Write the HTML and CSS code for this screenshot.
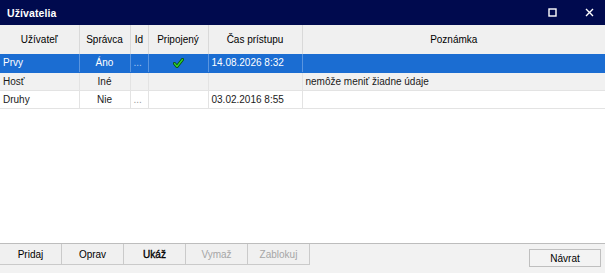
FILE: index.html
```html
<!DOCTYPE html>
<html lang="sk">

<head>
    <meta charset="UTF-8">
    <meta name="viewport" content="width=device-width, initial-scale=1.0">
    <title>Užívatelia</title>

    <link rel="stylesheet" href="styles.css">
</head>

<body>
    <div class="window">
        <div class="titlebar">
            <span class="title">Užívatelia</span>
            <div class="controls">
                <svg width="9" height="9" viewBox="0 0 9 9">
                    <rect x="1" y="1" width="7" height="7" fill="none" stroke="#fff" stroke-width="1.4" />
                </svg>
                <svg width="9" height="9" viewBox="0 0 9 9">
                    <path d="M1 1 L8 8 M8 1 L1 8" stroke="#fff" stroke-width="1.4" />
                </svg>
            </div>
        </div>

        <div class="grid">
            <table>
                <colgroup>
                    <col class="c-user">
                    <col class="c-admin">
                    <col class="c-id">
                    <col class="c-conn">
                    <col class="c-time">
                    <col>
                </colgroup>
                <thead>
                    <tr>
                        <th>Užívateľ</th>
                        <th>Správca</th>
                        <th>Id</th>
                        <th>Pripojený</th>
                        <th>Čas prístupu</th>
                        <th>Poznámka</th>
                    </tr>
                </thead>
                <tbody>
                    <tr class="selected">
                        <td>Prvy</td>
                        <td class="center">Áno</td>
                        <td class="dots">...</td>
                        <td class="center">
                            <svg class="check" width="11" height="10" viewBox="0 0 11 10">
                                <path d="M1.5 5.5 L4 8.5 L9.5 1.5" fill="none" stroke="#0a4f0a" stroke-width="3" stroke-linecap="round" stroke-linejoin="round" />
                                <path d="M1.5 5.5 L4 8.5 L9.5 1.5" fill="none" stroke="#2fd12f" stroke-width="1.4" stroke-linecap="round" stroke-linejoin="round" />
                            </svg>
                        </td>
                        <td>14.08.2026 8:32</td>
                        <td></td>
                    </tr>
                    <tr class="alt">
                        <td>Hosť</td>
                        <td class="center">Iné</td>
                        <td></td>
                        <td></td>
                        <td></td>
                        <td>nemôže meniť žiadne údaje</td>
                    </tr>
                    <tr>
                        <td>Druhy</td>
                        <td class="center">Nie</td>
                        <td class="dots">...</td>
                        <td></td>
                        <td>03.02.2016 8:55</td>
                        <td></td>
                    </tr>
                </tbody>
            </table>
        </div>

        <div class="footer">
            <div class="actions">
                <button type="button">Pridaj</button>
                <button type="button">Oprav</button>
                <button type="button" class="default">Ukáž</button>
                <button type="button" disabled>Vymaž</button>
                <button type="button" disabled>Zablokuj</button>
            </div>
            <button type="button" class="back">Návrat</button>
        </div>
    </div>
</body>

</html>
```

FILE: styles.css
```css
body {
    margin: 0;
    font-family: "Liberation Sans", Arial, sans-serif;
    font-size: 10px;
    color: #1a1a1a;
}

.window {
    display: flex;
    flex-direction: column;
    width: 605px;
    height: 273px;
    background: #fff;
}

.titlebar {
    display: flex;
    align-items: center;
    justify-content: space-between;
    height: 25px;
    padding: 0 8px 0 7px;
    background: #000a4e;
    color: #fff;
    box-sizing: border-box;
}

.title {
    font-weight: bold;
    font-size: 10.5px;
    letter-spacing: 0.1px;
}

.controls {
    display: flex;
    gap: 28px;
    padding-right: 3px;
}

.grid {
    flex: 1;
}

table {
    width: 605px;
    border-collapse: collapse;
    table-layout: fixed;
}

.c-user {
    width: 79px;
}

.c-admin {
    width: 51px;
}

.c-id {
    width: 18px;
}

.c-conn {
    width: 60px;
}

.c-time {
    width: 94px;
}

th {
    height: 29px;
    padding: 0;
    font-weight: normal;
    color: #000;
    background: #f0f0f0;
    border-left: 1px solid #d9d9d9;
    box-sizing: border-box;
}

th:first-child {
    border-left: none;
}

td {
    height: 18px;
    padding: 0 3px;
    border-left: 1px solid #e3e3e3;
    border-bottom: 1px solid #e3e3e3;
    white-space: nowrap;
    overflow: hidden;
    box-sizing: border-box;
}

td:first-child {
    border-left: none;
}

.center {
    text-align: center;
}

.dots {
    color: #999;
}

.selected td {
    background: #1b6dd2;
    color: #fff;
    border-left-color: #5a95df;
    border-bottom-color: #1b6dd2;
}

.selected .dots {
    color: #a9c8f0;
}

.check {
    display: block;
    margin: 0 auto;
}

.alt td {
    background: #f1f1f1;
}

.footer {
    display: flex;
    justify-content: space-between;
    height: 30px;
    background: #f2f2f2;
    border-top: 1px solid #bdbdbd;
    box-sizing: border-box;
}

.actions {
    display: flex;
    align-self: flex-start;
    border-bottom: 1px solid #cacaca;
}

button {
    font-family: inherit;
    font-size: 10px;
    color: #000;
    background: #f0f0f0;
    border: none;
    padding: 0;
}

.actions button {
    width: 62px;
    height: 20px;
    border-right: 1px solid #cacaca;
}

.actions button.default {
    -webkit-text-stroke: 0.35px #000;
}

.actions button:disabled {
    color: #a6a6a6;
}

.back {
    width: 72px;
    height: 18px;
    margin: 5px 4px 0 0;
    border: 1px solid #bfbfbf;
    background: #f3f3f3;
}
```
